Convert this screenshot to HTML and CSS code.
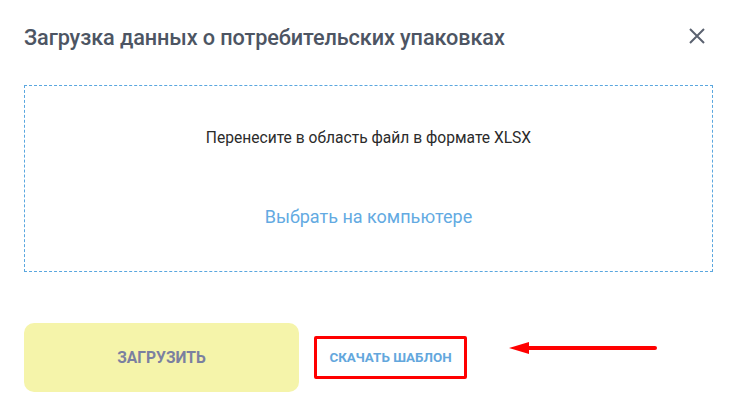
FILE: index.html
```html
<!DOCTYPE html>
<html lang="ru">
<head>
<meta charset="utf-8">
<link rel="stylesheet" href="styles.css">
</head>
<body>
<div class="modal">
  <div class="header">
    <h1 class="title">Загрузка данных о потребительских упаковках</h1>
    <button class="close" aria-label="Закрыть">
      <svg width="18" height="18" viewBox="0 0 18 18"><path d="M2 2 L16 16 M16 2 L2 16" stroke="#5b6270" stroke-width="2" fill="none"/></svg>
    </button>
  </div>
  <div class="drop">
    <div class="drop-text">Перенесите в область файл в формате XLSX</div>
    <div class="drop-link">Выбрать на компьютере</div>
  </div>
  <div class="footer">
    <button class="upload">ЗАГРУЗИТЬ</button>
    <div class="template">СКАЧАТЬ ШАБЛОН</div>
    <svg class="arrow" width="150" height="16" viewBox="0 0 150 16">
      <polygon points="0,8 20,2 20,14" fill="#ff0000"/>
      <line x1="18" y1="8" x2="146" y2="8" stroke="#ff0000" stroke-width="4" stroke-linecap="round"/>
    </svg>
  </div>
</div>
</body>
</html>
```
FILE: styles.css
```css
html, body {
  margin: 0;
  padding: 0;
  background: #ffffff;
}
body {
  font-family: Roboto, "Liberation Sans", sans-serif;
  width: 739px;
  height: 411px;
  overflow: hidden;
}
.modal {
  padding: 0 26px 0 24px;
}
.header {
  display: flex;
  align-items: center;
  justify-content: space-between;
  height: 85px;
  padding-bottom: 10px;
  box-sizing: border-box;
}
.title {
  margin: 0;
  font-size: 21.7px;
  font-weight: 500;
  color: #4d5563;
  letter-spacing: -0.1px;
}
.close {
  border: 0;
  background: none;
  padding: 0;
  margin-right: 7px;
  margin-bottom: 4px;
  width: 18px;
  height: 18px;
  display: flex;
  cursor: pointer;
}
.drop {
  height: 187px;
  border: 1px dashed #5aa7df;
  box-sizing: border-box;
  display: flex;
  flex-direction: column;
  align-items: center;
  padding-top: 42px;
}
.drop-text {
  font-size: 15.6px;
  color: #2b2b2b;
  line-height: 20px;
}
.drop-link {
  margin-top: 58px;
  font-size: 18px;
  color: #63aae2;
  line-height: 22px;
}
.footer {
  display: flex;
  align-items: center;
  margin-top: 51px;
}
.upload {
  width: 275px;
  height: 69px;
  border: 0;
  border-radius: 10px;
  background: #f5f4aa;
  color: #7b80a0;
  font-family: Roboto, "Liberation Sans", sans-serif;
  font-weight: 700;
  font-size: 15.6px;
  padding: 0;
}
.template {
  margin-left: 15px;
  width: 153px;
  height: 43px;
  box-sizing: border-box;
  border: 3px solid #ff0000;
  border-radius: 2px;
  display: flex;
  align-items: center;
  justify-content: center;
  color: #63a7dd;
  font-weight: 700;
  font-size: 13.4px;
}
.arrow {
  margin-left: 42px;
  margin-top: -20px;
}
```
